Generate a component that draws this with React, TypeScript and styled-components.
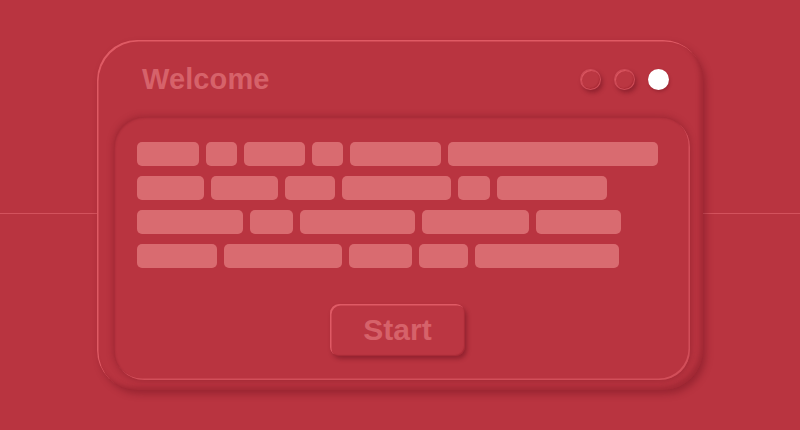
import * as React from "react";
import styled, { createGlobalStyle } from "styled-components";

const GlobalStyle = createGlobalStyle`
  html, body {
    margin: 0;
    padding: 0;
    background: #b93440;
  }
  body {
    font-family: "Liberation Sans", Arial, sans-serif;
  }
`;

const Page = styled.div`
  position: relative;
  width: 800px;
  height: 430px;
  display: flex;
  align-items: center;
  justify-content: center;
  background: #b93440;
  overflow: hidden;

  &::before {
    content: "";
    position: absolute;
    left: 0;
    right: 0;
    top: 213px;
    height: 1px;
    background: #d3525d;
  }
`;

const Window = styled.div`
  position: relative;
  width: 606px;
  height: 350px;
  box-sizing: border-box;
  display: flex;
  flex-direction: column;
  border-radius: 40px;
  background: #b93440;
  box-shadow:
    inset 1.5px 1.5px 0 rgba(236, 104, 114, 0.75),
    inset -3px -3px 4px rgba(120, 20, 32, 0.35),
    3px 4px 7px rgba(105, 16, 28, 0.4);
`;

const Header = styled.div`
  height: 74px;
  display: flex;
  align-items: center;
  justify-content: space-between;
  padding: 4px 34px 0 45px;
  box-sizing: border-box;
`;

const Title = styled.h1`
  margin: 0;
  font-size: 29px;
  line-height: 1;
  font-weight: 700;
  color: #d6626a;
  letter-spacing: 0.1px;
`;

const Dots = styled.div`
  display: flex;
  gap: 13px;
`;

const Dot = styled.span<{ $active?: boolean }>`
  width: 21px;
  height: 21px;
  box-sizing: border-box;
  border-radius: 50%;
  background: ${(p) => (p.$active ? "#ffffff" : "#bb3742")};
  border: ${(p) => (p.$active ? "none" : "1px solid rgba(214, 84, 96, 0.75)")};
  box-shadow: ${(p) =>
    p.$active
      ? "1px 2px 3px rgba(105, 16, 28, 0.35)"
      : "inset 1px 1px 0 rgba(232, 100, 110, 0.7), inset -1px -1px 1px rgba(150, 30, 40, 0.4), 2px 3px 4px rgba(100, 14, 26, 0.45)"};
`;

const Panel = styled.div`
  margin: 3px 13px 10px 17px;
  flex: 1;
  border-radius: 30px;
  padding: 25px 32px 0 23px;
  display: flex;
  flex-direction: column;
  box-sizing: border-box;
  box-shadow:
    0 0 6px 1px rgba(112, 18, 30, 0.35),
    inset -1.5px -1.5px 0 rgba(226, 96, 106, 0.6),
    inset 1px 1px 2px rgba(120, 20, 32, 0.3);
`;

const Rows = styled.div`
  display: flex;
  flex-direction: column;
  gap: 10px;
`;

const Row = styled.div`
  display: flex;
  gap: 7px;
`;

const Bar = styled.span`
  height: 24px;
  border-radius: 5px;
  background: #d96b70;
  flex: none;
`;

const Actions = styled.div`
  display: flex;
  justify-content: center;
  margin-top: 36px;
`;

const StartButton = styled.button`
  width: 135px;
  height: 52px;
  border: none;
  border-radius: 9px;
  background: #bb3642;
  font-family: "Liberation Sans", Arial, sans-serif;
  font-size: 30px;
  font-weight: 700;
  color: #d6626a;
  cursor: pointer;
  padding: 0;
  box-shadow:
    inset 1.5px 1.5px 0 rgba(232, 100, 110, 0.8),
    inset -1px -1px 1px rgba(140, 26, 38, 0.4),
    2px 3px 4px rgba(100, 14, 26, 0.45);
`;

const rows: number[][] = [
  [62, 31, 61, 31, 91, 210],
  [67, 67, 50, 109, 32, 110],
  [106, 43, 115, 107, 85],
  [80, 118, 63, 49, 144],
];

export default function App() {
  return (
    <>
      <GlobalStyle />
      <Page>
        <Window>
          <Header>
            <Title>Welcome</Title>
            <Dots>
              <Dot />
              <Dot />
              <Dot $active />
            </Dots>
          </Header>
          <Panel>
            <Rows>
              {rows.map((row, i) => (
                <Row key={i}>
                  {row.map((w, j) => (
                    <Bar key={j} style={{ width: w }} />
                  ))}
                </Row>
              ))}
            </Rows>
            <Actions>
              <StartButton>Start</StartButton>
            </Actions>
          </Panel>
        </Window>
      </Page>
    </>
  );
}
